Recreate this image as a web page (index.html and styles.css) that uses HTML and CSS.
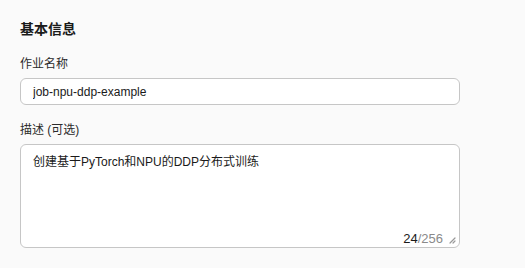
FILE: index.html
```html
<!DOCTYPE html>
<html lang="zh-CN">

<head>
    <meta charset="UTF-8">
    <meta name="viewport" content="width=device-width, initial-scale=1.0">
    <title>基本信息</title>
    <link rel="stylesheet" href="styles.css">
</head>

<body>
    <div class="section">
        <h3 class="section-title">基本信息</h3>

        <!-- 作业名称 -->
        <div class="field">
            <label class="field-label" for="jobName">作业名称</label>
            <input id="jobName" class="text-input" type="text" value="job-npu-ddp-example">
        </div>

        <!-- 描述 -->
        <div class="field">
            <label class="field-label" for="jobDesc">描述 (可选)</label>
            <div class="textarea-wrap">
                <textarea id="jobDesc" class="text-area">创建基于PyTorch和NPU的DDP分布式训练</textarea>
                <div class="counter"><span class="count-now">24</span>/256</div>
                <svg class="resize-grip" width="8" height="8" viewBox="0 0 8 8">
                    <path d="M7 2 L2 7 M7 5 L5 7" stroke="#999" stroke-width="1.2" stroke-linecap="round" fill="none"/>
                </svg>
            </div>
        </div>
    </div>
</body>

</html>
```

FILE: styles.css
```css
body {
    margin: 0;
    padding: 0;
    background-color: #fafafa;
    font-family: "Liberation Sans", "Noto Sans CJK SC", sans-serif;
    color: #1f1f1f;
}

.section {
    width: 440px;
    padding: 21px 20px 10px;
}

.section-title {
    margin: 0 0 19px;
    font-size: 14px;
    font-weight: bold;
    line-height: 16px;
    color: #1a1a1a;
}

.field {
    margin-bottom: 17px;
}

.field:last-child {
    margin-bottom: 0;
}

.field-label {
    display: block;
    font-size: 12px;
    line-height: 16px;
    margin-bottom: 6px;
    color: #2b2b2b;
}

.text-input {
    box-sizing: border-box;
    display: block;
    width: 100%;
    height: 27px;
    padding: 0 12px;
    border: 1px solid #c6c6c6;
    border-radius: 6px;
    background-color: #fff;
    font-family: inherit;
    font-size: 12px;
    color: #1a1a1a;
    outline: none;
}

.textarea-wrap {
    position: relative;
}

.text-area {
    box-sizing: border-box;
    display: block;
    width: 100%;
    height: 104px;
    padding: 9px 12px;
    border: 1px solid #c6c6c6;
    border-radius: 6px;
    background-color: #fff;
    font-family: inherit;
    font-size: 12px;
    line-height: 16px;
    color: #1a1a1a;
    resize: none;
    outline: none;
}

.counter {
    position: absolute;
    right: 17px;
    bottom: 1px;
    font-size: 13px;
    line-height: 16px;
    color: #8a8a8a;
}

.count-now {
    color: #1a1a1a;
}

.resize-grip {
    position: absolute;
    right: 4px;
    bottom: 4px;
}
```
